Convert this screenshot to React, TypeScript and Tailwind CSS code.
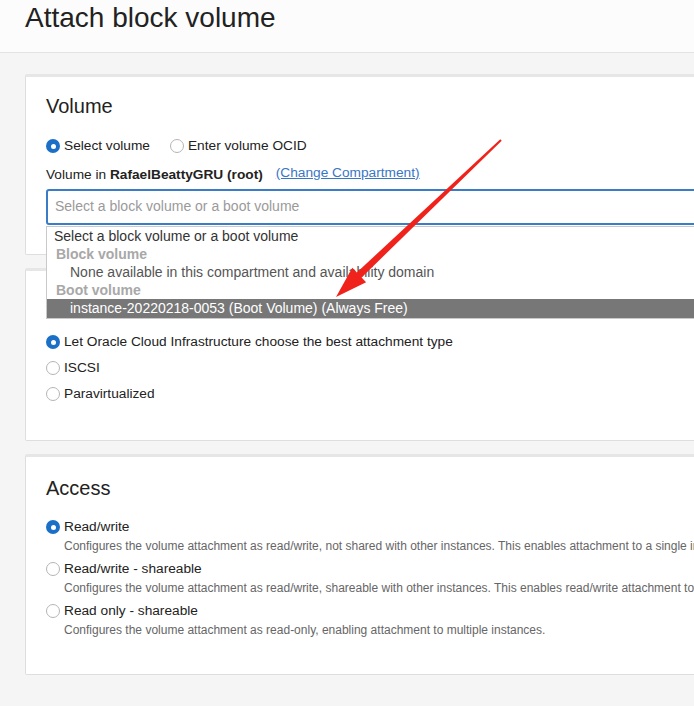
import React from "react";

const font = { fontFamily: '"Liberation Sans", Arial, sans-serif' };

function Radio({ checked }: { checked?: boolean }) {
  return checked ? (
    <span className="inline-flex h-[14px] w-[14px] shrink-0 items-center justify-center rounded-full bg-[#1b6fc7]">
      <span className="h-[5px] w-[5px] rounded-full bg-white" />
    </span>
  ) : (
    <span className="inline-block h-[14px] w-[14px] shrink-0 rounded-full border border-[#b5b5b5] bg-white" />
  );
}

function Card({ children, className = "" }: { children: React.ReactNode; className?: string }) {
  return (
    <div className={"w-[900px] border border-[#dedede] border-t-[3px] border-t-[#e6e6e6] bg-white rounded-[2px] " + className}>
      {children}
    </div>
  );
}

export default function App() {
  return (
    <div style={font} className="relative h-[706px] w-[694px] overflow-hidden bg-[#f5f5f5] text-[#222]">
      <div className="h-[53px] border-b border-[#e3e3e3] bg-[#fcfcfc] pl-[25px] pt-[1px]">
        <h1 className="text-[28px] leading-[34px] text-[#222]">Attach block volume</h1>
      </div>

      <div className="flex flex-col pl-[25px] pt-[21px]">
        <Card className="pb-[29px] pl-[20px] pt-[17px]">
          <h2 className="text-[20px] leading-[24px] text-[#222]">Volume</h2>
          <div className="mt-[18px] flex h-[20px] items-center text-[13.7px]">
            <label className="flex items-center gap-[4px]">
              <Radio checked />
              <span>Select volume</span>
            </label>
            <label className="ml-[20px] flex items-center gap-[4px]">
              <Radio />
              <span>Enter volume OCID</span>
            </label>
          </div>
          <div className="mt-[9px] flex h-[20px] items-center text-[13.7px]">
            <span>
              Volume in <b>RafaelBeattyGRU (root)</b>
            </span>
            <a className="relative -top-[2px] ml-[13px] text-[#3a76c4] underline">(Change Compartment)</a>
          </div>
          <div className="relative mt-[4px]">
            <div className="flex h-[36px] items-center rounded-[3px] border-2 border-[#3a7cc6] bg-white pb-[1px] pl-[7px] text-[14px] text-[#9a9a9a]">
              Select a block volume or a boot volume
            </div>
            <div className="absolute left-0 top-[37px] z-10 w-full border border-[#c9c9c9] bg-white text-[14px]">
              <div className="flex h-[18px] items-center pl-[7px] text-[#333]">Select a block volume or a boot volume</div>
              <div className="flex h-[18px] items-center pl-[9px] font-bold text-[#a8a8a8]">Block volume</div>
              <div className="flex h-[18px] items-center pl-[23px] text-[#555]">
                None available in this compartment and availability domain
              </div>
              <div className="flex h-[18px] items-center pl-[9px] font-bold text-[#a8a8a8]">Boot volume</div>
              <div className="flex h-[19px] items-center bg-[#777] pl-[23px] text-white">
                instance-20220218-0053 (Boot Volume) (Always Free)
              </div>
            </div>
          </div>
        </Card>

        <Card className="mt-[13px] pb-[36px] pl-[20px] pt-[17px]">
          <h2 className="text-[20px] leading-[24px] text-[#222]">Attachment type</h2>
          <div className="mt-[20px] flex flex-col gap-[6px] text-[13.7px]">
            <label className="flex h-[20px] items-center gap-[4px]">
              <Radio checked />
              <span>Let Oracle Cloud Infrastructure choose the best attachment type</span>
            </label>
            <label className="flex h-[20px] items-center gap-[4px]">
              <Radio />
              <span>ISCSI</span>
            </label>
            <label className="flex h-[20px] items-center gap-[4px]">
              <Radio />
              <span>Paravirtualized</span>
            </label>
          </div>
        </Card>

        <Card className="mt-[13px] pb-[36px] pl-[20px] pt-[19px]">
          <h2 className="text-[20px] leading-[24px] text-[#222]">Access</h2>
          <div className="mt-[17px] flex flex-col gap-[5px]">
            {[
              {
                t: "Read/write",
                d: "Configures the volume attachment as read/write, not shared with other instances. This enables attachment to a single instance only.",
                c: true,
              },
              {
                t: "Read/write - shareable",
                d: "Configures the volume attachment as read/write, shareable with other instances. This enables read/write attachment to multiple instances.",
              },
              {
                t: "Read only - shareable",
                d: "Configures the volume attachment as read-only, enabling attachment to multiple instances.",
              },
            ].map((o) => (
              <div key={o.t}>
                <label className="flex h-[20px] items-center gap-[4px] text-[13.7px]">
                  <Radio checked={o.c} />
                  <span>{o.t}</span>
                </label>
                <div className="ml-[18px] mt-[1px] whitespace-nowrap text-[12px] leading-[16px] text-[#666]">{o.d}</div>
              </div>
            ))}
          </div>
        </Card>
      </div>

      <svg className="pointer-events-none absolute left-0 top-0 z-20" width="694" height="706" viewBox="0 0 694 706">
        <polygon
          points="336,297 352.3,267.8 356.8,272.5 500.3,139.3 501.7,140.7 361.6,277.5 366.1,282.2"
          fill="#f0231c"
        />
      </svg>
    </div>
  );
}
